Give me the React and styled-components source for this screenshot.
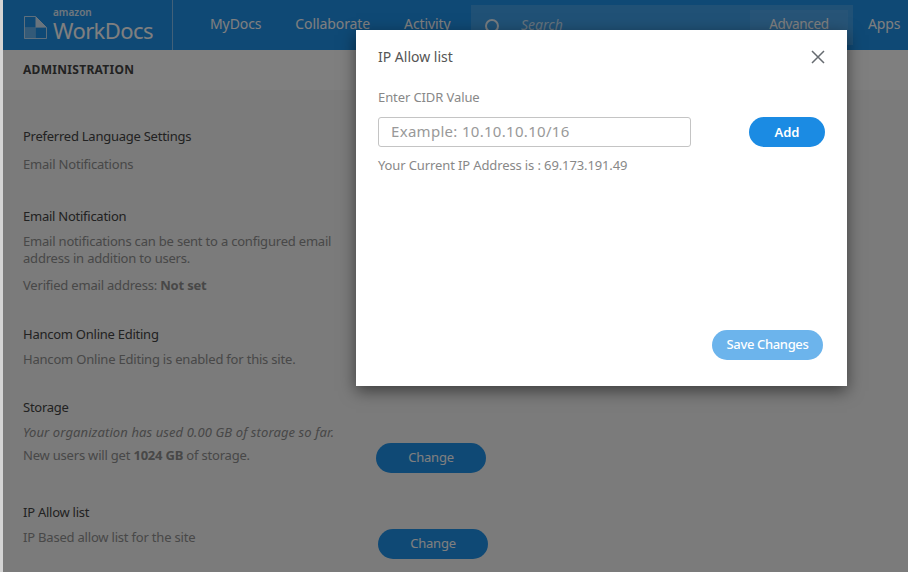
import styled, { createGlobalStyle } from "styled-components";

const GlobalStyle = createGlobalStyle`
  html, body {
    margin: 0;
    padding: 0;
    height: 100%;
    overflow: hidden;
    font-family: "Noto Sans", "Open Sans", sans-serif;
  }
  * { box-sizing: border-box; }
`;

const Logo = () => (
  <LogoWrap>
    <LogoMark width="23" height="23" viewBox="0 0 23 23">
      <path d="M0.5 0.5H11.5L22.5 11.5V22.5H0.5Z" fill="#1f92ea" stroke="#fff" strokeOpacity="0.7" />
      <path d="M11.5 0.5L22.5 11.5H11.5Z" fill="#fff" fillOpacity="0.8" />
      <rect x="1" y="11.5" width="10.5" height="10.5" fill="#fff" fillOpacity="0.32" />
      <path d="M11.5 11.5V22M1 11.5H22" stroke="#fff" strokeOpacity="0.15" fill="none" />
    </LogoMark>
    <LogoText>
      <Amazon>amazon</Amazon>
      <Product>WorkDocs</Product>
    </LogoText>
  </LogoWrap>
);

const SearchIcon = () => (
  <SearchGlyph width="18" height="18" viewBox="0 0 18 18" fill="none" stroke="#fff" strokeWidth="2" strokeOpacity="0.9">
    <circle cx="8" cy="8" r="6" />
    <path d="M12.5 12.5L17 17" />
  </SearchGlyph>
);

const CloseIcon = () => (
  <svg width="14" height="14" viewBox="0 0 14 14" stroke="#666b70" strokeWidth="1.5" fill="none">
    <path d="M1 1L13 13M13 1L1 13" />
  </svg>
);

export default function App() {
  return (
    <Page>
      <GlobalStyle />
      <Header>
        <Logo />
        <Nav>
          <NavItem>MyDocs</NavItem>
          <NavItem>Collaborate</NavItem>
          <NavItem>Activity</NavItem>
        </Nav>
        <SearchBox>
          <SearchIcon />
          <SearchText>Search</SearchText>
          <Advanced>Advanced</Advanced>
        </SearchBox>
        <NavItem>Apps</NavItem>
      </Header>
      <TitleBar>ADMINISTRATION</TitleBar>
      <Content>
        <Section $gap={34}>
          <Title>Preferred Language Settings</Title>
          <Text $top={11}>Email Notifications</Text>
        </Section>
        <Section $gap={31}>
          <Title>Email Notification</Title>
          <Text $width={320}>
            Email notifications can be sent to a configured email address in addition to users.
          </Text>
          <Text $top={10}>
            Verified email address: <b>Not set</b>
          </Text>
        </Section>
        <Section $gap={30}>
          <Title>Hancom Online Editing</Title>
          <Text>Hancom Online Editing is enabled for this site.</Text>
        </Section>
        <Section $gap={39}>
          <Title>Storage</Title>
          <Row>
            <div>
              <ItalicText>Your organization has used 0.00 GB of storage so far.</ItalicText>
              <Text $top={6}>
                New users will get <b>1024 GB</b> of storage.
              </Text>
            </div>
            <ChangeButton $left={376} $top={19}>Change</ChangeButton>
          </Row>
        </Section>
        <Section $gap={44}>
          <Title>IP Allow list</Title>
          <Row>
            <Text>IP Based allow list for the site</Text>
            <ChangeButton $left={378} $top={0}>Change</ChangeButton>
          </Row>
        </Section>
      </Content>
      <Scrim />
      <Modal role="dialog" aria-modal="true">
        <ModalHead>
          <ModalTitle>IP Allow list</ModalTitle>
          <CloseButton aria-label="Close"><CloseIcon /></CloseButton>
        </ModalHead>
        <FieldLabel>Enter CIDR Value</FieldLabel>
        <FieldRow>
          <CidrInput placeholder="Example: 10.10.10.10/16" />
          <AddButton>Add</AddButton>
        </FieldRow>
        <CurrentIp>Your Current IP Address is : 69.173.191.49</CurrentIp>
        <ModalFoot>
          <SaveButton>Save Changes</SaveButton>
        </ModalFoot>
      </Modal>
    </Page>
  );
}

const Page = styled.div`
  position: relative;
  width: 908px;
  height: 572px;
  overflow: hidden;
  background: #f6f6f6;
  border-left: 3px solid #d4d4d4;
  color: #444;
  font-size: 13px;
`;

const Header = styled.header`
  display: flex;
  align-items: center;
  height: 50px;
  background: #1f92ea;
  color: #fff;
`;

const LogoWrap = styled.div`
  display: flex;
  align-items: flex-start;
  gap: 6px;
  width: 170px;
  height: 50px;
  padding: 7px 0 0 21px;
  border-right: 1px solid rgba(255, 255, 255, 0.45);
  flex: none;
`;

const LogoMark = styled.svg`
  margin-top: 9px;
  flex: none;
`;

const LogoText = styled.div`
  display: flex;
  flex-direction: column;
`;

const Amazon = styled.span`
  font-size: 10px;
  line-height: 11px;
  font-weight: 600;
  opacity: 0.85;
`;

const Product = styled.span`
  font-size: 22px;
  line-height: 24px;
  letter-spacing: -0.6px;
`;

const Nav = styled.nav`
  display: flex;
  gap: 34px;
  margin-left: 37px;
  width: 261px;
  flex: none;
`;

const NavItem = styled.a`
  margin-bottom: 2px;
  font-size: 14px;
  line-height: 18px;
  letter-spacing: -0.1px;
  white-space: nowrap;
`;

const SearchBox = styled.div`
  display: flex;
  align-items: center;
  align-self: flex-start;
  width: 382px;
  height: 40px;
  margin: 5px 15px 0 0;
  padding: 0 5px 0 13px;
  background: rgba(255, 255, 255, 0.15);
`;

const SearchGlyph = styled.svg`
  margin-top: 3px;
  flex: none;
`;

const SearchText = styled.span`
  margin-left: 19px;
  margin-bottom: 1px;
  font-style: italic;
  font-size: 14px;
  opacity: 0.7;
`;

const Advanced = styled.span`
  align-self: flex-end;
  width: 98px;
  height: 35px;
  margin-left: auto;
  line-height: 29px;
  text-align: center;
  font-size: 13.5px;
  letter-spacing: -0.3px;
  background: rgba(255, 255, 255, 0.08);
`;

const TitleBar = styled.div`
  height: 40px;
  padding-left: 20px;
  line-height: 39px;
  font-size: 12px;
  font-weight: 700;
  letter-spacing: 0.3px;
  background: #ffffff;
  color: #444;
`;

const Content = styled.main`
  padding: 37px 0 0 20px;
`;

const Section = styled.section`
  margin-bottom: ${(p) => p.$gap}px;
`;

const Title = styled.h3`
  margin: 0 0 8px;
  font-size: 13px;
  line-height: 18px;
  font-weight: 400;
  letter-spacing: -0.25px;
  color: #444;
`;

const Text = styled.p`
  margin: ${(p) => p.$top || 0}px 0 0;
  max-width: ${(p) => (p.$width ? `${p.$width}px` : "none")};
  font-size: 13px;
  line-height: 17px;
  letter-spacing: -0.2px;
  color: #909090;

  b { font-weight: 700; }
`;

const ItalicText = styled(Text)`
  font-style: italic;
  letter-spacing: 0.1px;
`;

const Row = styled.div`
  position: relative;
`;

const ChangeButton = styled.button`
  position: absolute;
  left: ${(p) => p.$left - 23}px;
  top: ${(p) => p.$top}px;
  width: 110px;
  height: 30px;
  padding: 0 0 2px;
  border: none;
  border-radius: 15px;
  background: #1f92ea;
  color: #fff;
  font: inherit;
  font-size: 13px;
  letter-spacing: -0.2px;
`;

const Scrim = styled.div`
  position: absolute;
  inset: 0 0 0 -3px;
  background: rgba(0, 0, 0, 0.5);
`;

const Modal = styled.div`
  position: absolute;
  left: 353px;
  top: 30px;
  width: 491px;
  height: 356px;
  padding: 17px 22px 26px;
  display: flex;
  flex-direction: column;
  background: #fff;
  box-shadow: 0 5px 15px rgba(0, 0, 0, 0.5);
  color: #666;
`;

const ModalHead = styled.div`
  display: flex;
  justify-content: space-between;
  align-items: center;
  height: 18px;
  margin-bottom: 23px;
`;

const ModalTitle = styled.h2`
  margin: 0;
  font-size: 14px;
  font-weight: 400;
  color: #555;
`;

const CloseButton = styled.button`
  display: flex;
  margin-top: 2px;
  padding: 0;
  border: none;
  background: none;
`;

const FieldLabel = styled.label`
  font-size: 13px;
  line-height: 18px;
  letter-spacing: -0.1px;
  color: #888;
`;

const FieldRow = styled.div`
  display: flex;
  justify-content: space-between;
  margin-top: 11px;
`;

const CidrInput = styled.input`
  width: 313px;
  height: 30px;
  padding: 0 12px 2px;
  border: 1px solid #c4c4c4;
  border-radius: 3px;
  font: inherit;
  font-size: 15px;
  letter-spacing: 0.3px;

  &::placeholder {
    color: #999;
    opacity: 1;
  }
`;

const AddButton = styled.button`
  width: 76px;
  height: 30px;
  border: none;
  border-radius: 15px;
  background: #1b8be3;
  color: #fff;
  font: inherit;
  font-size: 13px;
  font-weight: 600;
`;

const CurrentIp = styled.p`
  margin: 9px 0 0;
  font-size: 13px;
  line-height: 18px;
  letter-spacing: -0.12px;
  color: #888;
`;

const ModalFoot = styled.div`
  display: flex;
  justify-content: flex-end;
  margin-top: auto;
`;

const SaveButton = styled.button`
  width: 111px;
  height: 30px;
  margin-right: 2px;
  padding: 0 0 2px;
  border: none;
  border-radius: 15px;
  background: #6cb4ec;
  color: #fff;
  font: inherit;
  font-size: 13px;
  font-weight: 500;
  letter-spacing: -0.35px;
`;
